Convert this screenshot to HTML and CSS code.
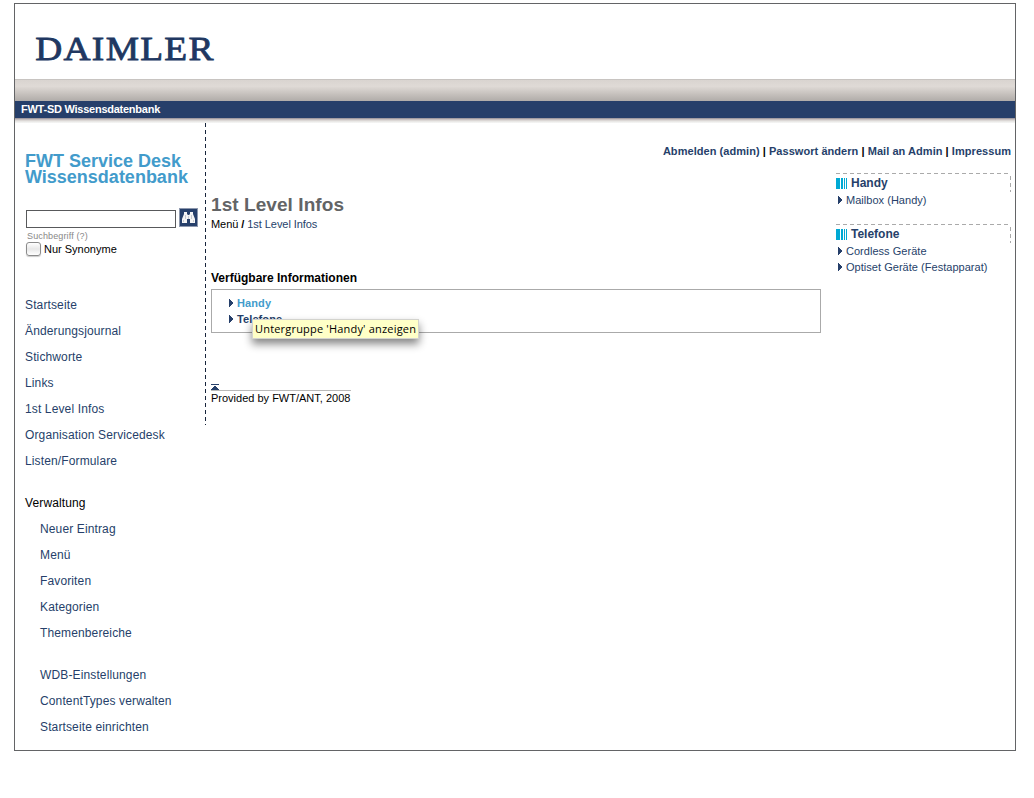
FILE: index.html
```html
<!DOCTYPE html>
<html lang="de">
<head>
<meta charset="utf-8">
<title>FWT-SD Wissensdatenbank</title>
<link rel="stylesheet" href="styles.css">
</head>
<body>
<svg class="defs" width="0" height="0" aria-hidden="true">
  <symbol id="arrow" viewBox="0 0 4 8"><path d="M0 0h1v1h1v1h1v1h1v2h-1v1h-1v1h-1v1h-1z" fill="#263f6a" shape-rendering="crispEdges"/></symbol>
  <symbol id="bars" viewBox="0 0 11 11"><path d="M0 0h4v11h-4zM5 0h2v11h-2zM8 0h1v11h-1zM10 0h1v11h-1z" fill="#00a9d4" shape-rendering="crispEdges"/></symbol>
</svg>
<div class="page">
  <header class="brand">
    <svg class="logo" width="200" height="44" viewBox="0 0 200 44" role="img" aria-label="DAIMLER"><text x="0.2" y="31" transform="scale(1.1 1)">DAIMLER</text></svg>
  </header>
  <div class="metal"></div>
  <div class="titlebar"><span class="t-bar">FWT-SD Wissensdatenbank</span></div>
  <div class="shade"></div>
  <div class="columns">
    <aside class="side">
      <h1 class="site">FWT Service Desk<br>Wissensdatenbank</h1>
      <form class="search">
        <div class="row">
          <input class="field" type="text" aria-label="Suchbegriff">
          <button class="find" type="button" aria-label="Suchen">
            <svg width="19" height="19" viewBox="0 0 19 19"><rect x=".5" y=".5" width="18" height="18" fill="#263f6a" stroke="#8d98ae"/><path d="M5 4h3v2l1 1h1l1-1V4h3v2l2 5v4h-5v-4H8v4H3v-4l2-5z" fill="#f4f4f4"/><path d="M6.5 7v4M12.5 7v4M9.500 8v3M4.500 12v2M14.500 12v2" stroke="#c6c9d0" fill="none"/></svg>
          </button>
        </div>
        <div class="hint">Suchbegriff (?)</div>
        <label class="check"><input type="checkbox" class="box"><span>Nur Synonyme</span></label>
      </form>
      <nav class="menu">
        <a>Startseite</a><a>Änderungsjournal</a><a>Stichworte</a><a>Links</a><a>1st Level Infos</a><a>Organisation Servicedesk</a><a>Listen/Formulare</a>
        <span class="group">Verwaltung</span>
        <div class="sub"><a>Neuer Eintrag</a><a>Menü</a><a>Favoriten</a><a>Kategorien</a><a>Themenbereiche</a></div>
        <div class="sub admin"><a>WDB-Einstellungen</a><a>ContentTypes verwalten</a><a>Startseite einrichten</a></div>
      </nav>
    </aside>
    <svg class="divider" width="1" height="302"><path d="M.5 0v302" stroke="#17243b" stroke-dasharray="4 3"/></svg>
    <div class="body">
      <div class="tools"><a>Abmelden (admin)</a> | <a>Passwort ändern</a> | <a>Mail an Admin</a> | <a>Impressum</a></div>
      <div class="content">
        <main class="main">
          <h2 class="heading">1st Level Infos</h2>
          <div class="crumbs">Menü <b>/</b> <a>1st Level Infos</a></div>
          <h3 class="available">Verfügbare Informationen</h3>
          <div class="panel">
            <a class="entry active"><svg width="4" height="8"><use href="#arrow"/></svg><span>Handy</span></a>
            <a class="entry"><svg width="4" height="8"><use href="#arrow"/></svg><span>Telefone</span></a>
            <div class="tooltip">Untergruppe 'Handy' anzeigen</div>
          </div>
          <footer class="foot">
            <svg class="top" width="8" height="6" viewBox="0 0 8 6" shape-rendering="crispEdges"><path d="M0 0h8v1h-8zM3 2h2v1h1v1h1v1h1v1h-8v-1h1v-1h1v-1h1z" fill="#263f6a"/></svg>
            <div class="provided"><span>Provided by FWT/ANT, 2008</span></div>
          </footer>
        </main>
        <aside class="related">
          <section class="topic">
            <svg class="frame" width="175" height="19"><path d="M0 .5h175" stroke="#aaa" stroke-dasharray="4 3"/><path d="M174.5 3v16" stroke="#aaa" stroke-dasharray="4 3"/></svg>
            <h4><svg width="11" height="11"><use href="#bars"/></svg><span>Handy</span></h4>
            <a class="sublink"><svg width="4" height="8"><use href="#arrow"/></svg><span>Mailbox (Handy)</span></a>
          </section>
          <section class="topic">
            <svg class="frame" width="175" height="19"><path d="M0 .5h175" stroke="#aaa" stroke-dasharray="4 3"/><path d="M174.5 3v16" stroke="#aaa" stroke-dasharray="4 3"/></svg>
            <h4><svg width="11" height="11"><use href="#bars"/></svg><span>Telefone</span></h4>
            <a class="sublink"><svg width="4" height="8"><use href="#arrow"/></svg><span>Cordless Geräte</span></a>
            <a class="sublink"><svg width="4" height="8"><use href="#arrow"/></svg><span>Optiset Geräte (Festapparat)</span></a>
          </section>
        </aside>
      </div>
    </div>
  </div>
</div>
</body>
</html>
```
FILE: styles.css
```css
* { box-sizing: border-box; }
body { margin: 0; background: #fff; color: #000; font: 11px/16px "Liberation Sans", Arial, sans-serif; }
h1, h2, h3, h4 { margin: 0; }
svg { display: block; flex: none; }
a { color: #263f6a; }
.defs { position: absolute; }
.page { width: 1002px; height: 748px; margin: 3px 0 0 14px; border: 1px solid #636466; }
.brand { height: 75px; padding: 25px 0 0 20px; }
.logo text { font: 34px "Liberation Serif", serif; letter-spacing: 1.2px; fill: #203761; stroke: #203761; stroke-width: .8px; }
.metal { height: 22px; border-top: 1px solid #c8c4c1; background: linear-gradient(#d9d4d0, #dfdad6 30%, #c4bfbb 70%, #b0aca9); }
.titlebar { height: 17px; padding-left: 6px; background: #263f6a; color: #fff; font-weight: bold; line-height: 17px; }
.t-bar { letter-spacing: -.25px; }
.shade { height: 5px; background: linear-gradient(#8f8a94, #cfc9c7 35%, #e7e5e3 65%, #f7f8f7); }
.columns { display: flex; }
.side { width: 190px; padding: 30px 0 0 10px; }
.site { color: #429bcb; font-size: 18px; line-height: 16px; white-space: nowrap; }
.search { margin: 23px 0 0 1px; }
.row { display: flex; gap: 3px; align-items: flex-end; height: 20px; }
.field { width: 150px; height: 18px; border: 1px solid #58595b; padding: 0; background: #fff; }
.find { align-self: flex-start; border: 0; padding: 0; background: none; }
.hint { margin: 2px 0 0 1px; height: 11px; color: #888; font-size: 9px; line-height: 12px; letter-spacing: .13px; }
.check { display: flex; align-items: center; gap: 3px; height: 16px; }
.box { appearance: none; width: 15px; height: 14px; margin: 0; border: 1px solid #8b8b8b; border-radius: 3px; background: linear-gradient(#fff, #e8e8e8 50%, #fff); box-shadow: 0 1px 1px #ccc; }
.menu { display: flex; flex-direction: column; margin-top: 35px; font-size: 12px; line-height: 26px; letter-spacing: .13px; }
.group { margin-top: 16px; }
.sub { display: flex; flex-direction: column; padding-left: 15px; }
.admin { margin-top: 16px; }
.body { flex: 1; min-width: 0; padding-top: 20px; }
.tools { padding-right: 4px; text-align: right; font-weight: bold; letter-spacing: .05px; white-space: nowrap; }
.content { display: flex; justify-content: space-between; padding: 14px 4px 0 5px; }
.main { width: 610px; padding-top: 21px; }
.heading { color: #636466; font-size: 19px; line-height: 22px; letter-spacing: .07px; }
.crumbs { letter-spacing: -.06px; }
.available { margin-top: 37px; font-size: 12px; line-height: 18px; }
.panel { position: relative; height: 44px; margin-top: 2px; padding: 5px 0 0 17px; border: 1px solid #aaa; }
.entry { display: flex; align-items: center; gap: 4px; height: 16px; font-weight: bold; letter-spacing: .1px; }
.active { color: #429bcb; }
.tooltip { position: absolute; left: 40px; top: 29px; width: 167px; height: 20px; border: 1px solid #d3d3ce; background: #ffffc7; color: #000; padding-left: 2px; font: 11px/18px "Open Sans", "Noto Sans", sans-serif; letter-spacing: .19px; white-space: nowrap; box-shadow: 0 5px 9px rgba(0,0,0,.48); }
.foot { width: 140px; margin-top: 51px; }
.provided { border-top: 1px solid #b9b9b9; line-height: 15px; white-space: nowrap; }
.related { width: 175px; }
.topic { position: relative; padding-top: 1px; margin-bottom: 16px; }
.frame { position: absolute; left: 0; top: 0; }
.topic h4 { display: flex; align-items: center; gap: 4px; height: 18px; color: #263f6a; font-size: 12px; line-height: 18px; }
.sublink { display: flex; align-items: center; gap: 4px; height: 16px; padding-left: 2px; letter-spacing: .03px; white-space: nowrap; }
```
